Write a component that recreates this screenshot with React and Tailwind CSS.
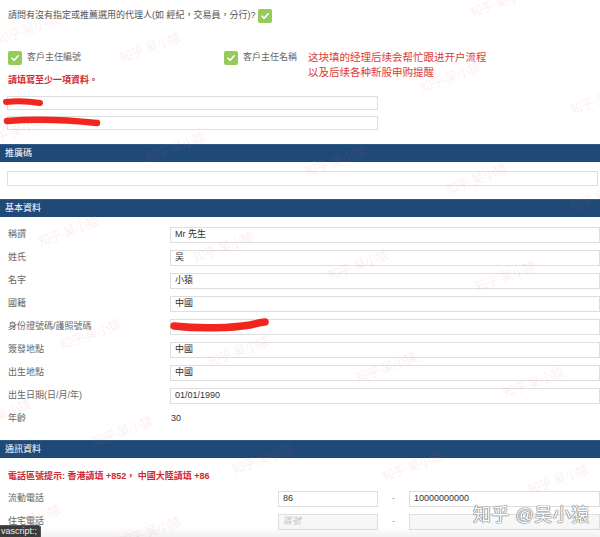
import React from "react";

const FONT = "font-['Liberation_Sans','Noto_Sans_CJK_TC',sans-serif]";

function Check() {
  return (
    <span className="inline-flex h-[14px] w-[14px] shrink-0 items-center justify-center rounded-[2px] bg-[#94cc5a]">
      <svg width="10" height="10" viewBox="0 0 10 10">
        <path d="M2 5.2 L4.2 7.3 L8.2 2.8" fill="none" stroke="#fff" strokeWidth="1.6" strokeLinecap="round" strokeLinejoin="round" />
      </svg>
    </span>
  );
}

function Header({ children }) {
  return (
    <div className="flex h-[18px] items-center border-t border-[#2d5a88] bg-[#1f4a78] px-[5px] text-[9px] text-white">
      {children}
    </div>
  );
}

function Input({ value, className = "", placeholder, gray, h = "h-[16px]" }) {
  return (
    <div
      className={`flex ${h} items-center border border-[#dedede] px-[4px] text-[9px] ${
        gray ? "bg-[#f7f7f7]" : "bg-white"
      } ${className}`}
    >
      {value ? (
        <span className="text-[#333]">{value}</span>
      ) : placeholder ? (
        <span className="italic text-[#c4c4c4]">{placeholder}</span>
      ) : null}
    </div>
  );
}

function Row({ label, value, plain }) {
  return (
    <div className="flex h-[16px] items-center">
      <div className="w-[170px] shrink-0 pl-[8px] text-[9px] text-[#666]">{label}</div>
      {plain ? (
        <div className="pl-[1px] text-[9px] text-[#333]">{value}</div>
      ) : (
        <Input value={value} className="flex-1" />
      )}
    </div>
  );
}

const marks = [
  [27, 30], [150, 48], [500, 3], [450, 78], [600, 100], [15, 132], [175, 148],
  [335, 162], [476, 180], [600, 197], [68, 232], [223, 248], [358, 266], [505, 277],
  [90, 335], [238, 352], [386, 368], [533, 383], [0, 415], [122, 432], [262, 460],
  [412, 467], [558, 480], [30, 520], [150, 532],
];

export default function App() {
  return (
    <div className={`relative h-[537px] w-[600px] overflow-hidden bg-white ${FONT}`}>
      {/* top area */}
      <div className="px-[8px] pt-[9px]">
        <div className="flex h-[14px] items-center gap-[2px] text-[9px] text-[#555]">
          <span>請問有沒有指定或推薦選用的代理人(如 經紀，交易員，分行)?</span>
          <Check />
        </div>
        <div className="mt-[28px] flex h-[14px] items-center">
          <div className="flex w-[216px] items-center gap-[5px] text-[9px] text-[#666]">
            <Check />
            <span>客戶主任編號</span>
          </div>
          <div className="flex items-center gap-[5px] text-[9px] text-[#666]">
            <Check />
            <span>客戶主任名稱</span>
          </div>
        </div>
        <div className="mt-[9px] flex h-[14px] items-center text-[9px] font-bold text-[#d0282e]">
          請填寫至少一項資料。
        </div>
        <div className="ml-[-1px] mt-[8px] flex w-[371px] flex-col gap-[6px]">
          <Input h="h-[14px]" />
          <Input h="h-[14px]" />
        </div>
      </div>

      <div className="mt-[14px]">
        <Header>推廣碼</Header>
      </div>
      <div className="ml-[7px] mr-[2px] mt-[9px]">
        <Input h="h-[15px]" />
      </div>

      <div className="mt-[13px]">
        <Header>基本資料</Header>
      </div>
      <div className="mt-[10px] flex flex-col gap-[7px]">
        <Row label="稱謂" value="Mr 先生" />
        <Row label="姓氏" value="吴" />
        <Row label="名字" value="小猿" />
        <Row label="國籍" value="中國" />
        <Row label="身份證號碼/護照號碼" value=" " />
        <Row label="簽發地點" value="中國" />
        <Row label="出生地點" value="中國" />
        <Row label="出生日期(日/月/年)" value="01/01/1990" />
        <Row label="年齡" value="30" plain />
      </div>

      <div className="mt-[13px]">
        <Header>通訊資料</Header>
      </div>
      <div className="mt-[12px] flex h-[14px] items-center px-[8px] text-[9px] font-bold text-[#d0282e]">
        電話區號提示: 香港請填 +852， 中國大陸請填 +86
      </div>
      <div className="mt-[7px] flex flex-col gap-[7px]">
        <div className="flex h-[16px] items-center">
          <div className="w-[278px] shrink-0 pl-[8px] text-[9px] text-[#666]">流動電話</div>
          <Input value="86" className="w-[100px]" />
          <div className="w-[31px] text-center text-[9px] text-[#999]">-</div>
          <Input value="10000000000" className="flex-1" />
        </div>
        <div className="flex h-[16px] items-center">
          <div className="w-[278px] shrink-0 pl-[8px] text-[9px] text-[#666]">住宅電話</div>
          <Input placeholder="區號" gray className="w-[100px]" />
          <div className="w-[31px] text-center text-[9px] text-[#999]">-</div>
          <Input gray className="flex-1" />
        </div>
      </div>

      {/* red marker scribbles */}
      <svg className="pointer-events-none absolute left-0 top-0" width="600" height="537">
        <path d="M6 102 C14 101, 28 101, 40 103" stroke="#f2261e" strokeWidth="6" strokeLinecap="round" fill="none" />
        <path d="M7 121 C30 119, 60 119, 97 123" stroke="#f2261e" strokeWidth="6.5" strokeLinecap="round" fill="none" />
        <path d="M174 326 C200 329, 232 328, 250 325 C258 323, 262 322, 265 322" stroke="#f2261e" strokeWidth="7.5" strokeLinecap="round" fill="none" />
      </svg>

      {/* annotation */}
      <div className="pointer-events-none absolute left-[308px] top-[50px] text-[10.5px] leading-[15px] text-[#dd3a3a]">
        <div>这块填的经理后续会帮忙跟进开户流程</div>
        <div>以及后续各种新股申购提醒</div>
      </div>

      {/* watermarks */}
      {marks.map(([x, y], i) => (
        <div
          key={i}
          className="pointer-events-none absolute -translate-x-1/2 -translate-y-1/2 -rotate-[20deg] whitespace-nowrap text-[13px] tracking-[-1px] text-[rgba(225,90,90,0.11)]"
          style={{ left: x, top: y }}
        >
          知乎·吴小猿
        </div>
      ))}

      {/* bottom fade */}
      <div className="pointer-events-none absolute bottom-0 left-0 h-[10px] w-full bg-gradient-to-b from-transparent to-[rgba(0,0,0,0.06)]" />

      {/* zhihu signature */}
      <div className="pointer-events-none absolute left-[473px] top-[502px] whitespace-nowrap text-[18px] tracking-[0.5px] text-white [text-shadow:0_0_1px_#666,0_0_1px_#666,0_0_1px_#666]">
        知乎 @吴小猿
      </div>

      {/* status bar */}
      <div className="absolute bottom-0 left-0 flex h-[12px] items-center rounded-tr-[3px] border-r border-t border-[#555] bg-[#3b3b3b] pl-[1px] pr-[3px] text-[9px] text-[#eee]">
        vascript:;
      </div>
    </div>
  );
}
